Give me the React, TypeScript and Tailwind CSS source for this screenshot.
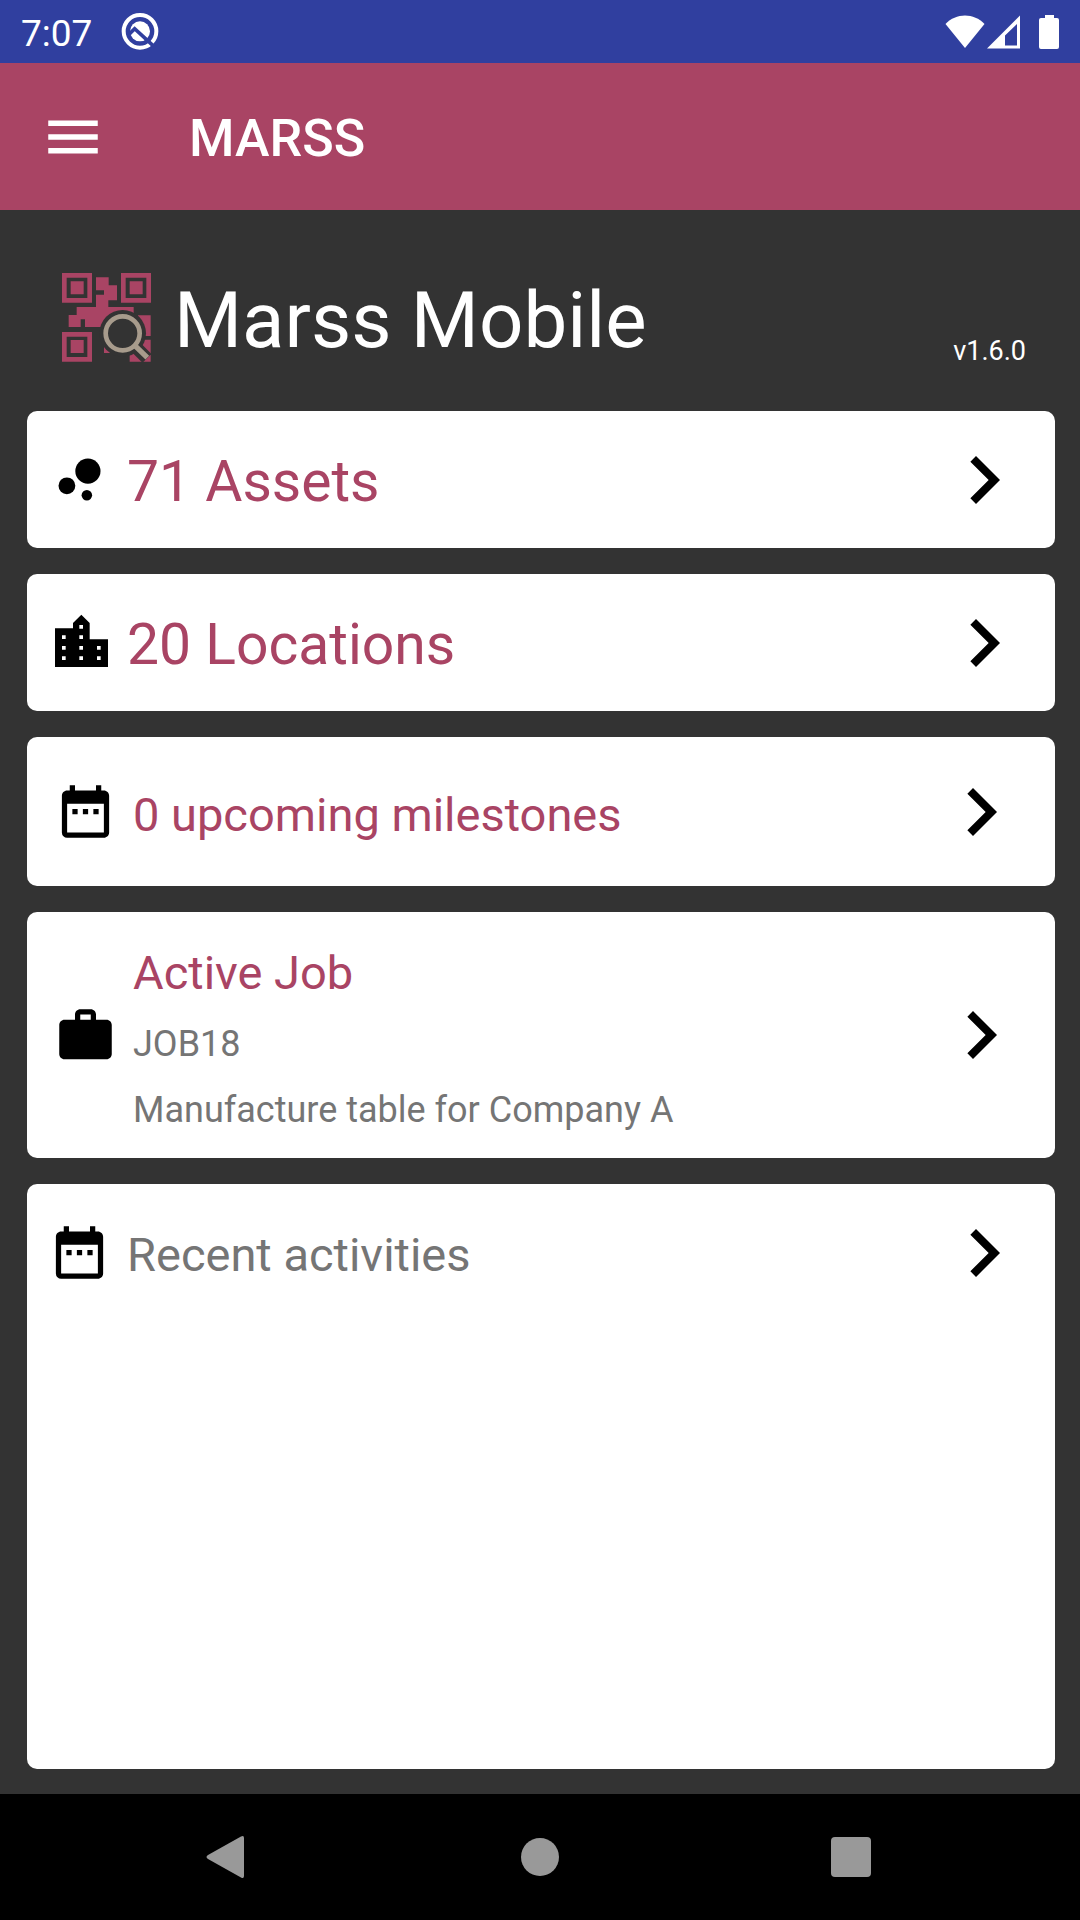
import React from 'react';
import { MdBubbleChart, MdDateRange, MdMenu, MdWork } from 'react-icons/md';

const Chevron: React.FC = () => (
  <svg viewBox="8 6 8 12" className="w-8 h-12 shrink-0" aria-hidden="true">
    <path d="M10 6 8.59 7.41 13.17 12l-4.58 4.59L10 18l6-6z" />
  </svg>
);

const CityIcon: React.FC = () => (
  <svg viewBox="84 636 189 189" className="w-[63px] h-[63px]" aria-hidden="true">
    <path d="M105 688h54v-16l25-25 25 25v49h55v83H105z" />
    <path
      d="M178 678h11v11h-11zM126 709h11v11h-11zM178 709h11v11h-11zM126 741h11v11h-11zM178 741h11v11h-11zM231 741h11v11h-11zM126 772h11v11h-11zM178 772h11v11h-11zM231 772h11v11h-11z"
      fill="white"
    />
  </svg>
);

const StatusBar: React.FC = () => (
  <div className="flex items-center justify-between h-[63px] pl-[21px] pr-[21px] bg-[#303f9f] text-white">
    <div className="flex items-center gap-[29px]">
      <span className="text-[37px] leading-[42px] pt-1">7:07</span>
      <svg viewBox="0 0 114 114" className="w-[38px] h-[38px]" aria-hidden="true">
        <circle cx="57" cy="55" r="49" fill="none" stroke="white" strokeWidth="12" />
        <circle cx="57" cy="55" r="30" fill="white" />
        <path d="M20 68 41 47 102 103" fill="none" stroke="#303f9f" strokeWidth="11" />
      </svg>
    </div>
    <div className="flex items-center">
      <svg viewBox="0 0 40 34" className="w-10 h-[34px]" aria-hidden="true">
        <path d="M20 33 .5 9C11-2.500 29-2.500 39.500 9z" fill="white" />
      </svg>
      <svg viewBox="0 0 34 34" className="w-[34px] h-[34px] ml-0.5 mr-[18px]" aria-hidden="true">
        <path d="M0 33.500 33 .5v33zM18 30.500h12V9L18 20.500z" fill="white" fillRule="evenodd" />
      </svg>
      <svg viewBox="0 0 20 34" className="w-5 h-[34px]" aria-hidden="true">
        <path d="M6 0h9v3h3q2 0 2 2v27q0 2-2 2H2q-2 0-2-2V5q0-2 2-2h4z" fill="white" />
      </svg>
    </div>
  </div>
);

const Logo: React.FC = () => (
  <svg viewBox="0 0 267 267" className="w-[89px] h-[89px] mb-[7px] shrink-0" aria-hidden="true">
    <g fill="none" stroke="#a94464" strokeWidth="14">
      <path d="M7 7h76v75H7zM184 7h76v75h-76zM7 184h76v75H7z" />
    </g>
    <g fill="#a94464">
      <path d="M26 25h39v39H26zM203 25h39v39h-39zM26 201h39v39H26z" />
      <path d="M102 13h38v24h25v45h-26v20h76v60H115v0H69v-23H56v23H20v-36h24v-24h58V65h24V52h-24z" />
      <path d="M228 127h38v62h-38zM126 215h22v25h-22zM203 200h63v66h-63z" />
    </g>
    <circle cx="182" cy="181" r="70" fill="#333333" />
    <path d="m217 218 38 38" stroke="#333333" strokeWidth="38" />
    <circle cx="182" cy="181" r="51" fill="none" stroke="#a79b8c" strokeWidth="14" />
    <path d="m218 217 38 37" stroke="#a79b8c" strokeWidth="16" />
  </svg>
);

interface CardProps {
  icon: React.ReactNode;
  label: string;
  size: 'large' | 'small';
}

const LinkCard: React.FC<CardProps> = ({ icon, label, size }) => (
  <a
    href="#"
    className={
      size === 'large'
        ? 'flex items-center bg-white rounded-[10px] h-[137px] pl-[21px] pr-[55px]'
        : 'flex items-center bg-white rounded-[10px] h-[149px] pl-[27px] pr-[58px]'
    }
  >
    {icon}
    <span
      className={
        size === 'large'
          ? 'flex-1 ml-4 pt-1 text-[57px] leading-[72px] text-[#a94464]'
          : 'flex-1 ml-4 pt-1.5 text-[47px] leading-[70px] text-[#a94464]'
      }
    >
      {label}
    </span>
    <Chevron />
  </a>
);

const App: React.FC = () => {
  return (
    <div className="min-h-screen flex flex-col bg-[#333333] font-[Roboto,sans-serif]">
      <StatusBar />

      <header className="flex items-center h-[147px] pl-10 bg-[#a94464] text-white">
        <button aria-label="Open menu">
          <MdMenu className="w-[66px] h-[66px]" />
        </button>
        <h1 className="ml-[83px] pt-1 text-[52px] leading-[64px] font-medium">MARSS</h1>
      </header>

      <main className="flex-1 flex flex-col pl-[27px] pr-[25px] pb-[25px]">
        <div className="flex items-end pt-[63px] pb-[42px] pl-[35px] pr-[29px] text-white">
          <Logo />
          <h2 className="flex-1 ml-[23px] text-[78px] leading-[96px]">Marss Mobile</h2>
          <span className="text-[27px] leading-[36px]">v1.6.0</span>
        </div>

        <div className="flex-1 flex flex-col gap-[26px]">
          <LinkCard icon={<MdBubbleChart className="w-[63px] h-[63px]" />} label="71 Assets" size="large" />
          <LinkCard icon={<CityIcon />} label="20 Locations" size="large" />
          <LinkCard icon={<MdDateRange className="w-[63px] h-[63px]" />} label="0 upcoming milestones" size="small" />

          <a href="#" className="flex items-center bg-white rounded-[10px] pl-[27px] pr-[58px]">
            <MdWork className="w-[63px] h-[63px]" />
            <div className="flex-1 ml-4 pt-[26px] pb-[15px] text-[#757575]">
              <h3 className="mb-[3px] text-[47px] leading-[70px] text-[#a94464]">Active Job</h3>
              <p className="text-[36px] leading-[66px]">JOB18</p>
              <p className="text-[36px] leading-[66px]">Manufacture table for Company A</p>
            </div>
            <Chevron />
          </a>

          <section className="flex-1 bg-white rounded-[10px]">
            <a href="#" className="flex items-center h-[137px] pl-[21px] pr-[55px]">
              <MdDateRange className="w-[63px] h-[63px]" />
              <h3 className="flex-1 ml-4 pt-1 text-[47px] leading-[70px] text-[#757575]">Recent activities</h3>
              <Chevron />
            </a>
          </section>
        </div>
      </main>

      <nav className="flex items-center justify-center gap-[264px] h-[126px] bg-black">
        <button aria-label="Back">
          <svg viewBox="0 0 48 48" className="w-12 h-12" fill="#999999">
            <path d="M4 22 37 3.500q3-1.500 3 1.500v38q0 3-3 1.500L4 26q-3-2 0-4z" />
          </svg>
        </button>
        <button aria-label="Home">
          <svg viewBox="0 0 48 48" className="w-12 h-12" fill="#999999">
            <circle cx="24" cy="24" r="19" />
          </svg>
        </button>
        <button aria-label="Recent apps">
          <svg viewBox="0 0 48 48" className="w-12 h-12" fill="#999999">
            <rect x="3" y="4" width="40" height="40" rx="4" />
          </svg>
        </button>
      </nav>
    </div>
  );
};

export default App;
